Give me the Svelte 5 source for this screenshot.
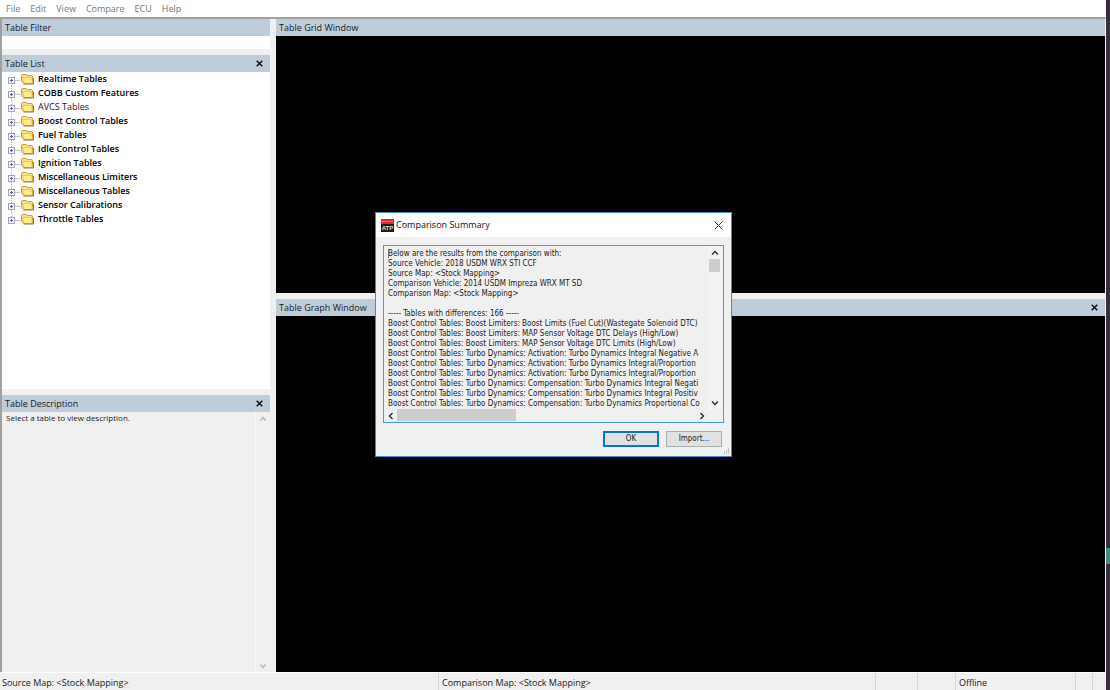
<script lang="ts">
  const menus = ['File', 'Edit', 'View', 'Compare', 'ECU', 'Help'];

  const folders = [
    { name: 'Realtime Tables', bold: true },
    { name: 'COBB Custom Features', bold: true },
    { name: 'AVCS Tables', bold: false },
    { name: 'Boost Control Tables', bold: true },
    { name: 'Fuel Tables', bold: true },
    { name: 'Idle Control Tables', bold: true },
    { name: 'Ignition Tables', bold: true },
    { name: 'Miscellaneous Limiters', bold: true },
    { name: 'Miscellaneous Tables', bold: true },
    { name: 'Sensor Calibrations', bold: true },
    { name: 'Throttle Tables', bold: true },
  ];

  const summary = [
    'Below are the results from the comparison with:',
    'Source Vehicle: 2018 USDM WRX STI CCF',
    'Source Map: <Stock Mapping>',
    'Comparison Vehicle: 2014 USDM Impreza WRX MT SD',
    'Comparison Map: <Stock Mapping>',
    '',
    '----- Tables with differences: 166 -----',
    'Boost Control Tables: Boost Limiters: Boost Limits (Fuel Cut)(Wastegate Solenoid DTC)',
    'Boost Control Tables: Boost Limiters: MAP Sensor Voltage DTC Delays (High/Low)',
    'Boost Control Tables: Boost Limiters: MAP Sensor Voltage DTC Limits (High/Low)',
    'Boost Control Tables: Turbo Dynamics: Activation: Turbo Dynamics Integral Negative A',
    'Boost Control Tables: Turbo Dynamics: Activation: Turbo Dynamics Integral/Proportion',
    'Boost Control Tables: Turbo Dynamics: Activation: Turbo Dynamics Integral/Proportion',
    'Boost Control Tables: Turbo Dynamics: Compensation: Turbo Dynamics Integral Negati',
    'Boost Control Tables: Turbo Dynamics: Compensation: Turbo Dynamics Integral Positiv',
    'Boost Control Tables: Turbo Dynamics: Compensation: Turbo Dynamics Proportional Co',
  ].join('\n');

  let filter = $state('');
  let dialogOpen = $state(true);
</script>

{#snippet cross()}
  <svg width="7" height="7" viewBox="0 0 7 7" aria-hidden="true">
    <path d="M.7 .7 6.3 6.3M6.3 .7 .7 6.3" stroke="#111" stroke-width="1.5" fill="none" />
  </svg>
{/snippet}

{#snippet chevron(d: string)}
  <svg width="8" height="8" viewBox="0 0 8 8" aria-hidden="true">
    <path {d} stroke="currentColor" stroke-width="1.5" fill="none" />
  </svg>
{/snippet}

<div class="desktop">
  <div class="app">
    <nav class="menubar">
      {#each menus as menu}
        <button class="menu">{menu}</button>
      {/each}
    </nav>

    <div class="workspace">
      <div class="side">
        <section class="pane">
          <header class="title"><label for="filter">Table Filter</label></header>
          <input id="filter" class="filter" type="text" bind:value={filter} />
        </section>

        <section class="pane list">
          <header class="title">
            <span>Table List</span>
            <button class="close" aria-label="Close table list">{@render cross()}</button>
          </header>
          <ul class="tree">
            {#each folders as folder, i}
              <li class:bold={folder.bold}>
                <svg width="33" height="14" viewBox="0 0 33 14" aria-hidden="true">
                  <path
                    d={i === 0 ? 'M9.5 7V14' : i === folders.length - 1 ? 'M9.5 0V7' : 'M9.5 0V14'}
                    stroke="#b5b5b5" stroke-dasharray="1 1"
                  />
                  <path d="M13 8.5H18" stroke="#c4c4c4" />
                  <rect x="6.5" y="5.5" width="6" height="6" fill="#f6f6f8" stroke="#a4a4a4" />
                  <path d="M8 8.5H11M9.5 7V10" stroke="#4a62b0" />
                  <path d="M19.5 4Q19.5 2.5 21 2.5H24L25.5 3.5H29Q30.5 3.5 30.5 5V11.5H22L19.5 9.5Z" fill="#fbe389" stroke="#cf9f35" />
                  <path d="M20.5 5.5H28.5Q29.5 5.5 29.7 6.5L30.5 11.5H23Q22 11.5 21.8 10.5Z" fill="#ffeb8f" stroke="#e2b640" stroke-width=".7" />
                  <path d="M21.5 12H31.5V6" stroke="#8a6a26" stroke-width=".9" fill="none" />
                </svg>
                <span>{folder.name}</span>
              </li>
            {/each}
          </ul>
        </section>

        <section class="pane description">
          <header class="title">
            <span>Table Description</span>
            <button class="close" aria-label="Close table description">{@render cross()}</button>
          </header>
          <div class="description-body">
            <p>Select a table to view description.</p>
            <div class="vscroll muted">
              <button class="arrow" aria-label="Scroll up">{@render chevron('M1.5 5.5 4 2.5 6.5 5.5')}</button>
              <button class="arrow" aria-label="Scroll down">{@render chevron('M1.5 2.5 4 5.5 6.5 2.5')}</button>
            </div>
          </div>
        </section>
      </div>

      <div class="main">
        <section class="pane grid-window">
          <header class="title"><span>Table Grid Window</span></header>
          <div class="canvas"></div>
        </section>
        <section class="pane graph-window">
          <header class="title">
            <span>Table Graph Window</span>
            <button class="close" aria-label="Close table graph window">{@render cross()}</button>
          </header>
          <div class="canvas"></div>
        </section>
      </div>
    </div>

    <footer class="statusbar">
      <span>Source Map: &lt;Stock Mapping&gt;</span>
      <span>Comparison Map: &lt;Stock Mapping&gt;</span>
      <span></span>
      <span></span>
      <span>Offline</span>
      <span></span>
      <span></span>
    </footer>
  </div>
  <div class="wallpaper"><i></i></div>
</div>

{#if dialogOpen}
  <div class="dialog" role="dialog" aria-labelledby="dialog-title">
    <header class="dialog-title">
      <svg width="13" height="13" viewBox="0 0 13 13" aria-hidden="true">
        <rect width="13" height="13" fill="#1d1b1c" />
        <rect width="13" height="5" fill="#e8262c" />
        <path d="M1 2.5H12" stroke="#f78a8a" stroke-dasharray="2 .6" stroke-width=".8" />
        <text x="6.5" y="11" text-anchor="middle" font-size="6" font-weight="bold" fill="#ddd" font-family="Liberation Sans, sans-serif">ATP</text>
      </svg>
      <h1 id="dialog-title">Comparison Summary</h1>
      <button class="dialog-close" aria-label="Close" onclick={() => (dialogOpen = false)}>
        <svg width="9" height="9" viewBox="0 0 9 9" aria-hidden="true">
          <path d="M.5 .5 8.5 8.5M8.5 .5 .5 8.5" stroke="#333" fill="none" />
        </svg>
      </button>
    </header>

    <div class="results">
      <textarea readonly wrap="off" spellcheck="false" aria-label="Comparison results" value={summary}></textarea>
      <div class="vscroll">
        <button class="arrow" aria-label="Scroll up">{@render chevron('M1 5.5 4 2.5 7 5.5')}</button>
        <div class="thumb"></div>
        <button class="arrow" aria-label="Scroll down">{@render chevron('M1 2.5 4 5.5 7 2.5')}</button>
      </div>
      <div class="hscroll">
        <button class="arrow" aria-label="Scroll left">{@render chevron('M5.5 1 2.5 4 5.5 7')}</button>
        <div class="thumb"></div>
        <button class="arrow" aria-label="Scroll right">{@render chevron('M2.5 1 5.5 4 2.5 7')}</button>
      </div>
      <div class="caret"></div>
    </div>

    <div class="actions">
      <button class="btn default" onclick={() => (dialogOpen = false)}>OK</button>
      <button class="btn">Import...</button>
    </div>

    <svg class="grip" width="7" height="7" viewBox="0 0 7 7" aria-hidden="true">
      <path d="M5 1h1M3 3h1M5 3h1M1 5h1M3 5h1M5 5h1" stroke="#b4b4b4" stroke-width="1.4" />
    </svg>
  </div>
{/if}

<style>
  :global(body) { margin: 0; overflow: hidden; }
  * { box-sizing: border-box; }
  button, input, textarea { font: inherit; color: inherit; }
  button {
    display: flex;
    align-items: center;
    justify-content: center;
    padding: 0;
    border: 0;
    background: none;
  }
  svg { display: block; flex: none; }

  .desktop {
    display: flex;
    height: 100vh;
    font-family: 'Open Sans', 'Segoe UI', sans-serif;
    font-size: 9px;
    line-height: 14px;
    color: #1a1a1a;
  }
  .wallpaper { width: 4px; padding-top: 548px; background: #3a2c3a; }
  .wallpaper i { display: block; height: 16px; background: #3f8f80; }
  .app {
    flex: 1;
    min-width: 0;
    display: flex;
    flex-direction: column;
    background: #f0f0f0;
  }

  .menubar {
    display: flex;
    gap: 10px;
    height: 17px;
    padding: 2px 6px 0;
    background: #fff;
    color: #777;
  }
  .menu { height: 14px; }

  .workspace {
    flex: 1;
    min-height: 0;
    display: flex;
    gap: 6px;
    border: 2px solid #a0a0a0;
    border-right: 1px solid #f4f4f4;
    border-bottom: 0;
  }
  .side, .main {
    display: flex;
    flex-direction: column;
    gap: 6px;
    min-height: 0;
  }
  .side { width: 268px; }
  .main { flex: 1; min-width: 0; }
  .pane { display: flex; flex-direction: column; min-height: 0; }
  .list { flex: 333 1 0; }
  .description { flex: 276 1 0; }
  .grid-window { flex: 274 1 0; }
  .graph-window { flex: 372 1 0; }

  .title {
    flex: none;
    display: flex;
    align-items: center;
    justify-content: space-between;
    height: 17px;
    padding: 0 4px 0 3px;
    background: #bfcddb;
  }
  .close { width: 14px; height: 14px; }
  .filter { height: 13px; padding: 0 3px; border: 0; outline: 0; background: #fff; }

  .tree {
    flex: 1;
    margin: 0;
    padding: 0;
    list-style: none;
    background: #fff;
  }
  .tree li { display: flex; gap: 3px; height: 14px; }
  .tree .bold { font-weight: 600; color: #000; }

  .description-body {
    flex: 1;
    display: flex;
    justify-content: space-between;
    min-height: 0;
    padding-right: 2px;
  }
  .description-body p {
    margin: 0;
    padding: 0 4px;
    font-size: 8px;
    line-height: 12px;
  }
  .canvas { flex: 1; background: #000; }

  .vscroll {
    display: flex;
    flex-direction: column;
    justify-content: space-between;
    width: 13px;
    color: #333;
  }
  .muted { border-left: 1px solid #f8f8f8; color: #b8b8b8; }
  .arrow { flex: none; width: 13px; height: 13px; }

  .statusbar {
    display: grid;
    grid-template-columns: 438px 1fr 42px 38px 120px 17px 14px;
    height: 18px;
    border-top: 1px solid #fff;
  }
  .statusbar span { padding: 3px 3px 0; border-left: 1px solid #d7d7d7; white-space: nowrap; }
  .statusbar span:first-child { padding: 3px 1px 0; border-left-color: transparent; }

  .dialog {
    position: absolute;
    top: 212px;
    left: 375px;
    width: 357px;
    border: 1px solid #3f8fd0;
    background: #f0f0f0;
    font-family: 'DejaVu Sans Condensed', Tahoma, sans-serif;
    font-size: 8px;
    line-height: 10px;
    color: #222;
  }
  .dialog-title {
    display: flex;
    align-items: center;
    gap: 2px;
    height: 24px;
    padding-left: 5px;
    background: #fff;
    color: #111;
  }
  .dialog-title h1 {
    flex: 1;
    margin: 0;
    font-family: 'Open Sans', 'Segoe UI', sans-serif;
    font-size: 9px;
    font-weight: 400;
    line-height: 14px;
  }
  .dialog-close { width: 25px; height: 24px; }

  .results {
    position: relative;
    display: grid;
    grid-template-columns: 1fr 15px;
    grid-template-rows: 163px 13px;
    margin: 8px 7px 0;
    border: 1px solid #4a9ae0;
  }
  .results textarea {
    width: 100%;
    height: 100%;
    margin: 0;
    padding: 3px 0 0 4px;
    border: 0;
    outline: 0;
    resize: none;
    overflow: hidden;
    background: none;
    white-space: pre;
  }
  .results .vscroll { justify-content: flex-start; background: #f3f3f3; }
  .results .vscroll .thumb { width: 11px; height: 13px; margin-left: 1px; background: #cdcdcd; }
  .results .vscroll .arrow:last-child { margin-top: auto; }
  .hscroll { display: flex; height: 13px; color: #333; }
  .hscroll .thumb { width: 119px; height: 12px; background: #cdcdcd; }
  .hscroll .arrow:last-child { margin-left: auto; }
  .caret { position: absolute; top: 3px; left: 4px; width: 1px; height: 9px; background: #777; }

  .actions {
    display: flex;
    justify-content: flex-end;
    gap: 7px;
    padding: 8px 9px 9px;
  }
  .btn { width: 56px; height: 16px; border: 1px solid #adadad; background: #e1e1e1; }
  .default { border: 2px solid #0078d7; }
  .grip { position: absolute; right: 1px; bottom: 1px; }
</style>
